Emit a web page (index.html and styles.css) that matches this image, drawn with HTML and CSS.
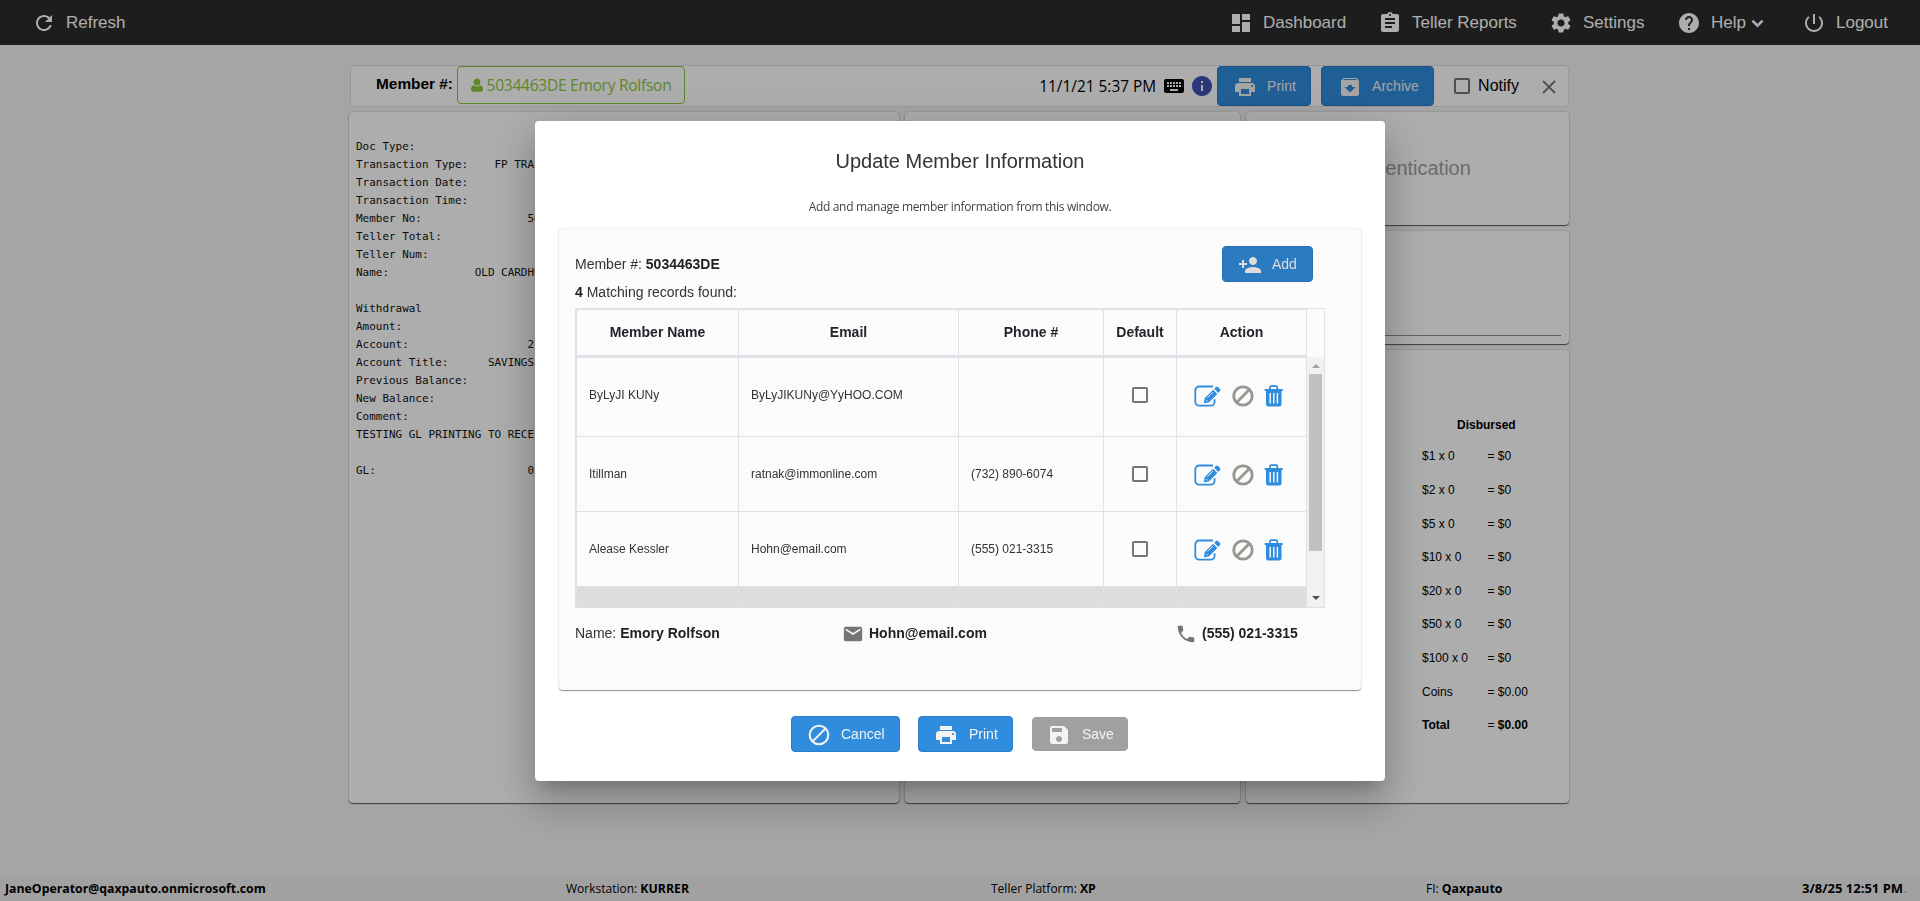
FILE: index.html
```html
<!DOCTYPE html>
<html lang="en">
<head>
<meta charset="utf-8">
<title>Update Member Information</title>
<link rel="stylesheet" href="styles.css">
</head>
<body>
<svg class="defs" width="0" height="0">
  <symbol id="refresh" viewBox="0 0 24 24"><path d="M17.65 6.35C16.2 4.9 14.21 4 12 4c-4.42 0-7.99 3.58-7.99 8s3.57 8 7.99 8c3.73 0 6.84-2.55 7.73-6h-2.08c-.82 2.33-3.04 4-5.65 4-3.31 0-6-2.69-6-6s2.69-6 6-6c1.66 0 3.14.69 4.22 1.78L13 11h7V4l-2.35 2.35z"/></symbol>
  <symbol id="dashboard" viewBox="0 0 24 24"><path d="M3 13h8V3H3v10zm0 8h8v-6H3v6zm10 0h8V11h-8v10zm0-18v6h8V3h-8z"/></symbol>
  <symbol id="assignment" viewBox="0 0 24 24"><path d="M19 3h-4.18C14.4 1.84 13.3 1 12 1c-1.3 0-2.4.84-2.82 2H5c-1.1 0-2 .9-2 2v14c0 1.100.9 2 2 2h14c1.100 0 2-.9 2-2V5c0-1.100-.9-2-2-2zm-7 0c.55 0 1 .45 1 1s-.45 1-1 1-1-.45-1-1 .45-1 1-1zm2 14H7v-2h7v2zm3-4H7v-2h10v2zm0-4H7V7h10v2z"/></symbol>
  <symbol id="settings" viewBox="0 0 24 24"><path d="M19.140 12.940c.04-.3.06-.61.06-.94 0-.32-.02-.64-.07-.94l2.030-1.580c.18-.14.23-.41.12-.61l-1.920-3.320c-.12-.22-.37-.29-.59-.22l-2.390.96c-.5-.38-1.030-.7-1.620-.94l-.36-2.540c-.04-.24-.24-.41-.48-.41h-3.840c-.24 0-.43.17-.47.41l-.36 2.540c-.59.24-1.130.57-1.620.94l-2.390-.96c-.22-.08-.47 0-.59.22L2.740 8.870c-.12.21-.08.47.12.61l2.030 1.580c-.05.3-.09.63-.09.94s.02.64.07.94l-2.030 1.580c-.18.14-.23.41-.12.61l1.920 3.320c.12.22.37.29.59.22l2.390-.96c.5.38 1.030.7 1.620.94l.36 2.540c.05.24.24.41.48.41h3.840c.24 0 .44-.17.47-.41l.36-2.540c.59-.24 1.130-.56 1.620-.94l2.390.96c.22.08.47 0 .59-.22l1.920-3.320c.12-.22.07-.47-.12-.61l-2.010-1.580zM12 15.600c-1.980 0-3.600-1.620-3.600-3.600s1.620-3.600 3.600-3.600 3.600 1.620 3.600 3.600-1.620 3.600-3.600 3.600z"/></symbol>
  <symbol id="help" viewBox="0 0 24 24"><path d="M12 2C6.480 2 2 6.480 2 12s4.480 10 10 10 10-4.480 10-10S17.520 2 12 2zm1 17h-2v-2h2v2zm2.070-7.750l-.9.920C13.450 12.900 13 13.500 13 15h-2v-.5c0-1.100.45-2.100 1.170-2.830l1.240-1.260c.37-.36.59-.86.59-1.410 0-1.100-.9-2-2-2s-2 .9-2 2H8c0-2.210 1.790-4 4-4s4 1.790 4 4c0 .88-.36 1.680-.93 2.250z"/></symbol>
  <symbol id="chevron" viewBox="0 0 12 8"><path d="M1.300 1.300L6 6L10.700 1.300" fill="none" stroke="currentColor" stroke-width="2.300"/></symbol>
  <symbol id="power" viewBox="0 0 24 24"><path d="M13 3h-2v10h2V3zm4.830 2.170l-1.420 1.420C17.990 7.860 19 9.810 19 12c0 3.870-3.130 7-7 7s-7-3.130-7-7c0-2.190 1.010-4.140 2.580-5.420L6.170 5.170C4.230 6.820 3 9.260 3 12c0 4.970 4.030 9 9 9s9-4.030 9-9c0-2.740-1.230-5.180-3.170-6.830z"/></symbol>
  <symbol id="user" viewBox="0 0 12 14"><path d="M6 0.500a3.200 3.400 0 0 1 0 7a3.200 3.400 0 0 1 0-7zM3 7.200C4.500 8.900 7.500 8.900 9 7.200C11 7.400 12 9 12 11.200C12 13 11 13.700 9.800 13.700H2.200C1 13.700 0 13 0 11.200C0 9 1 7.400 3 7.200z"/></symbol>
  <symbol id="keyboard" viewBox="0 0 24 24"><path d="M20 5H4c-1.100 0-1.990.9-1.990 2L2 17c0 1.100.9 2 2 2h16c1.100 0 2-.9 2-2V7c0-1.100-.9-2-2-2zm-9 3h2v2h-2V8zm0 3h2v2h-2v-2zM8 8h2v2H8V8zm0 3h2v2H8v-2zm-1 2H5v-2h2v2zm0-3H5V8h2v2zm9 7H8v-2h8v2zm0-4h-2v-2h2v2zm0-3h-2V8h2v2zm3 3h-2v-2h2v2zm0-3h-2V8h2v2z"/></symbol>
  <symbol id="info" viewBox="0 0 24 24"><path d="M12 2C6.480 2 2 6.480 2 12s4.480 10 10 10 10-4.480 10-10S17.520 2 12 2zm1 15h-2v-6h2v6zm0-8h-2V7h2v2z"/></symbol>
  <symbol id="print" viewBox="0 0 24 24"><path d="M19 8H5c-1.660 0-3 1.340-3 3v6h4v4h12v-4h4v-6c0-1.660-1.340-3-3-3zm-3 11H8v-5h8v5zm3-7c-.55 0-1-.45-1-1s.45-1 1-1 1 .45 1 1-.45 1-1 1zm-1-9H6v4h12V3z"/></symbol>
  <symbol id="archive" viewBox="0 0 24 24"><path d="M20.540 5.230l-1.390-1.680C18.880 3.210 18.470 3 18 3H6c-.47 0-.88.21-1.160.55L3.460 5.230C3.170 5.570 3 6.020 3 6.500V19c0 1.100.9 2 2 2h14c1.100 0 2-.9 2-2V6.500c0-.48-.17-.93-.46-1.270zM12 17.500L6.500 12H10v-2h4v2h3.500L12 17.500zM5.120 5l.81-1h12l.94 1H5.120z"/></symbol>
  <symbol id="close" viewBox="0 0 14 14"><path d="M1 1L13 13M13 1L1 13" fill="none" stroke="currentColor" stroke-width="1.800"/></symbol>
  <symbol id="person-add" viewBox="0 0 24 24"><path d="M15 12c2.210 0 4-1.790 4-4s-1.790-4-4-4-4 1.790-4 4 1.790 4 4 4zm-9-2V7H4v3H1v2h3v3h2v-3h3v-2H6zm9 4c-2.670 0-8 1.340-8 4v2h16v-2c0-2.660-5.330-4-8-4z"/></symbol>
  <symbol id="edit" viewBox="0 0 27 22"><path d="M19 1.500H5.200A3.900 3.900 0 0 0 1.300 5.400V16.800A3.900 3.900 0 0 0 5.200 20.700H16.700A3.900 3.900 0 0 0 20.600 16.800V14.200" fill="none" stroke="currentColor" stroke-width="1.800"/><path d="M10 18.300L10.600 13.200L19.200 4.800L23.300 9L14.800 17.500zM20.200 3.800L22 2Q23 1 24 2L26 4Q27 5 26 6L24.300 8z"/><path d="M13.400 12.600L19 7M12 14.800L13.600 16.400" stroke="#fbfbfb" stroke-width=".8" fill="none"/></symbol>
  <symbol id="ban" viewBox="0 0 22 22"><path d="M4.300 17.700L17.700 4.300" stroke="currentColor" stroke-width="2.800"/><circle cx="11" cy="11" r="9.200" fill="none" stroke="currentColor" stroke-width="2.800"/></symbol>
  <symbol id="trash" viewBox="0 0 20 22"><path d="M6 4.500V2.400Q6 1.200 7.200 1.200H12.100Q13.300 1.200 13.300 2.400V4.500" fill="none" stroke="currentColor" stroke-width="1.700"/><path d="M.7 4H18.700V6H17.500V19Q17.500 21.500 15.500 21.500H4.200Q2 21.500 2 19V6H.7z"/><path d="M6.200 8V18.500M9.800 8V18.500M13.400 8V18.500" stroke="#fbfbfb" stroke-width="1.400"/></symbol>
  <symbol id="mail" viewBox="0 0 24 24"><path d="M20 4H4c-1.100 0-1.990.9-1.990 2L2 18c0 1.100.9 2 2 2h16c1.100 0 2-.9 2-2V6c0-1.100-.9-2-2-2zm0 4l-8 5-8-5V6l8 5 8-5v2z"/></symbol>
  <symbol id="phone" viewBox="0 0 24 24"><path d="M6.620 10.790c1.440 2.830 3.760 5.140 6.590 6.590l2.200-2.200c.27-.27.67-.36 1.020-.24 1.120.37 2.330.57 3.570.57.55 0 1 .45 1 1V20c0 .55-.45 1-1 1-9.390 0-17-7.610-17-17 0-.55.45-1 1-1h3.500c.55 0 1 .45 1 1 0 1.250.2 2.450.57 3.570.11.35.03.74-.25 1.020l-2.200 2.200z"/></symbol>
  <symbol id="cancel" viewBox="0 0 22 22"><path d="M4 18L18 4" stroke="currentColor" stroke-width="2"/><circle cx="11" cy="11" r="9.300" fill="none" stroke="currentColor" stroke-width="2.100"/></symbol>
  <symbol id="save" viewBox="0 0 24 24"><path d="M17 3H5c-1.110 0-2 .9-2 2v14c0 1.100.89 2 2 2h14c1.100 0 2-.9 2-2V7l-4-4zm-5 16c-1.660 0-3-1.340-3-3s1.340-3 3-3 3 1.340 3 3-1.340 3-3 3zm3-10H5V5h10v4z"/></symbol>
</svg>

<div class="app">
  <header class="nav">
    <a class="nav-item"><svg class="i24"><use href="#refresh"/></svg><span>Refresh</span></a>
    <nav class="nav-right">
      <a class="nav-item nav-dashboard"><svg class="i24"><use href="#dashboard"/></svg><span>Dashboard</span></a>
      <a class="nav-item nav-reports"><svg class="i24"><use href="#assignment"/></svg><span>Teller Reports</span></a>
      <a class="nav-item nav-settings"><svg class="i24"><use href="#settings"/></svg><span>Settings</span></a>
      <a class="nav-item nav-help"><svg class="i24"><use href="#help"/></svg><span>Help</span><svg class="chev"><use href="#chevron"/></svg></a>
      <a class="nav-item nav-logout"><svg class="i24"><use href="#power"/></svg><span>Logout</span></a>
    </nav>
  </header>

  <main class="work">
    <section class="toolbar">
      <b class="member-label">Member #:</b>
      <span class="member-chip"><svg class="user-icon"><use href="#user"/></svg><span>5034463DE Emory Rolfson</span></span>
      <span class="stamp">11/1/21 5:37 PM</span>
      <svg class="i24 kb"><use href="#keyboard"/></svg>
      <svg class="i24 info"><use href="#info"/></svg>
      <span class="btn tool-btn tool-print"><svg class="i24"><use href="#print"/></svg>Print</span>
      <span class="btn tool-btn tool-archive"><svg class="i24"><use href="#archive"/></svg>Archive</span>
      <span class="box big"></span><span class="notify">Notify</span>
      <svg class="close"><use href="#close"/></svg>
    </section>

    <section class="columns">
      <div class="card receipt"><pre>Doc Type:
Transaction Type:    FP TRA
Transaction Date:
Transaction Time:
Member No:                50
Teller Total:
Teller Num:
Name:             OLD CARDHO

Withdrawal
Amount:
Account:                  2
Account Title:      SAVINGS
Previous Balance:
New Balance:
Comment:
TESTING GL PRINTING TO RECE

GL:                       0</pre></div>
      <div class="card"></div>
      <div class="side">
        <div class="card auth">Authentication</div>
        <div class="card sign"><div class="sign-line"></div></div>
        <div class="card cash">
          <b class="cash-title">Disbursed</b>
          <div class="cash-grid">
            <span>$1 x 0</span><span>= $0</span>
            <span>$2 x 0</span><span>= $0</span>
            <span>$5 x 0</span><span>= $0</span>
            <span>$10 x 0</span><span>= $0</span>
            <span>$20 x 0</span><span>= $0</span>
            <span>$50 x 0</span><span>= $0</span>
            <span>$100 x 0</span><span>= $0</span>
            <span>Coins</span><span>= $0.00</span>
            <b>Total</b><span>= <b>$0.00</b></span>
          </div>
        </div>
      </div>
    </section>
  </main>

  <footer class="status">
    <span class="st-user"><b>JaneOperator@qaxpauto.onmicrosoft.com</b></span>
    <span class="st-ws">Workstation: <b>KURRER</b></span>
    <span class="st-tp">Teller Platform: <b>XP</b></span>
    <span class="st-fi">FI: <b>Qaxpauto</b></span>
    <span class="st-time"><b>3/8/25 12:51 PM</b><i>.</i></span>
  </footer>
</div>

<div class="overlay">
  <div class="modal">
    <h1>Update Member Information</h1>
    <p class="sub">Add and manage member information from this window.</p>
    <div class="panel">
      <div class="panel-top">
        <div class="lines">
          <div>Member #: <b>5034463DE</b></div>
          <div><b>4</b> Matching records found:</div>
        </div>
        <span class="btn add"><svg class="i24"><use href="#person-add"/></svg>Add</span>
      </div>
      <div class="records">
        <div class="table">
          <div class="row head"><div>Member Name</div><div>Email</div><div>Phone #</div><div>Default</div><div>Action</div></div>
          <div class="row first"><div>ByLyJI KUNy</div><div>ByLyJIKUNy@YyHOO.COM</div><div></div><div class="mid"><span class="box"></span></div><div class="acts"><svg class="edit"><use href="#edit"/></svg><svg class="ban"><use href="#ban"/></svg><svg class="trash"><use href="#trash"/></svg></div></div>
          <div class="row"><div>Itillman</div><div>ratnak@immonline.com</div><div>(732) 890-6074</div><div class="mid"><span class="box"></span></div><div class="acts"><svg class="edit"><use href="#edit"/></svg><svg class="ban"><use href="#ban"/></svg><svg class="trash"><use href="#trash"/></svg></div></div>
          <div class="row"><div>Alease Kessler</div><div>Hohn@email.com</div><div>(555) 021-3315</div><div class="mid"><span class="box"></span></div><div class="acts"><svg class="edit"><use href="#edit"/></svg><svg class="ban"><use href="#ban"/></svg><svg class="trash"><use href="#trash"/></svg></div></div>
          <div class="row last"><div></div><div></div><div></div><div></div><div></div></div>
        </div>
        <div class="scroll"><i class="up"></i><i class="thumb"></i><i class="down"></i></div>
      </div>
      <div class="contact">
        <div class="c-name">Name: <b>Emory Rolfson</b></div>
        <div class="c-mail"><svg><use href="#mail"/></svg><b>Hohn@email.com</b></div>
        <div class="c-phone"><svg><use href="#phone"/></svg><b>(555) 021-3315</b></div>
      </div>
    </div>
    <div class="buttons">
      <span class="btn b-cancel"><svg class="i22"><use href="#cancel"/></svg>Cancel</span>
      <span class="btn b-print"><svg class="i24"><use href="#print"/></svg>Print</span>
      <span class="btn b-save"><svg class="i24"><use href="#save"/></svg>Save</span>
    </div>
  </div>
</div>
</body>
</html>
```
FILE: styles.css
```css
* { box-sizing: border-box; }
body { margin: 0; width: 1920px; height: 901px; overflow: hidden; font-family: "Liberation Sans", Arial, sans-serif; color: #000; }
svg { fill: currentColor; flex: none; display: block; }
.defs { display: none; }
.i22 { width: 22px; height: 22px; }
.i24 { width: 24px; height: 24px; }

.app { height: 901px; display: flex; flex-direction: column; background: #f3f3f3; }
.nav { height: 45px; background: #2c2c2c; color: #fff; display: flex; justify-content: space-between; padding: 0 32px; flex: none; }
.nav-right { display: flex; }
.nav-item { display: flex; align-items: center; font-size: 17px; white-space: nowrap; }
.nav-item span { margin-left: 10px; }
.nav-dashboard { width: 149px; }
.nav-reports { width: 171px; }
.nav-settings { width: 128px; }
.nav-help { width: 125px; }
.nav-help .chev { width: 13px; height: 9px; margin: 2px 0 0 5px; }
.nav-logout { width: 86px; }

.work { flex: 1; padding: 20px 351px 0 349px; }
.toolbar { height: 42px; margin-left: 1px; border: 1px solid #e1e1e1; border-radius: 4px; background: #fff; display: flex; align-items: center; padding: 0 12px 0 25px; width: 1219px; }
.member-label { font-size: 15.4px; margin-top: -4px; width: 81px; white-space: nowrap; }
.member-chip { align-self: flex-start; height: 38px; width: 228px; border: 1px solid #8dc63f; border-radius: 4px; color: #8dc63f; display: flex; align-items: center; justify-content: center; gap: 4px; font: 15.6px "Open Sans", sans-serif; letter-spacing: -.3px; white-space: nowrap; }
.user-icon { width: 12px; height: 14px; }
.stamp { margin-left: auto; font: 15.4px "Open Sans", sans-serif; margin-right: 6px; }
.kb { margin-right: 3.5px; }
.info { color: #3f51b5; margin-right: 3.5px; }
.btn { background: #308cdd; border: 1px solid #2a7dc8; border-radius: 4px; color: #f3f3f3; display: flex; align-items: center; font-size: 14px; white-space: nowrap; }
.tool-btn { height: 40px; }
.tool-btn svg { margin: 2px 10px 0 0; }
.tool-print { width: 94px; padding-left: 15px; margin-right: 10px; }
.tool-archive { width: 113px; padding-left: 16px; margin-right: 20px; }
.box { width: 16px; height: 16px; border: 2px solid #757575; border-radius: 2px; flex: none; }
.notify { font-size: 16px; margin: 0 23px 0 8px; }
.close { width: 14px; height: 14px; color: #777; margin-top: 2px; }

.columns { margin-top: 5px; height: 691px; display: grid; grid-template-columns: 550px 335px 323px; gap: 6px; }
.card { background: #fff; border-radius: 4px; box-shadow: 0 1px 1px rgba(0,0,0,.6), 0 0 2px rgba(0,0,0,.25); }
.receipt { padding: 26px 7px; }
.receipt pre { margin: 0; font: 10.96px/18px "DejaVu Sans Mono", monospace; width: 190px; overflow: hidden; color: #111; }
.side { display: grid; grid-template-rows: 113px 113px 453px; gap: 6px; }
.auth { text-align: center; font-size: 20px; color: #a0a0a0; padding-top: 45px; }
.sign { display: flex; align-items: flex-end; padding: 0 8px; }
.sign-line { flex: 1; height: 1px; background: #8f9090; margin-bottom: 8px; }
.cash { padding: 68px 0 0 176px; font-size: 12px; line-height: 14px; }
.cash-title { display: block; padding-left: 35px; margin-bottom: 7.600px; }
.cash-grid { display: grid; grid-template-columns: 65.500px auto; grid-auto-rows: 33.600px; align-items: center; }

.status { height: 26px; flex: none; background: #edeeef; font: 12px "Open Sans", sans-serif; display: grid; grid-template-columns: 561px 425px 435px 376px 1fr; padding-left: 5px; align-items: center; white-space: nowrap; }
.status b { font-size: 12.300px; }
.status .st-time b { font-size: 13px; }
.st-time i { color: #888; margin-left: 1px; font-style: normal; }

.overlay { position: fixed; inset: 0; background: rgba(0,0,0,.32); padding: 121px 535px; }
.modal { width: 850px; height: 660px; background: #fff; border-radius: 4px; box-shadow: 0 11px 15px -7px rgba(0,0,0,.2), 0 24px 38px 3px rgba(0,0,0,.14), 0 9px 46px 8px rgba(0,0,0,.12); padding: 28px 24px 0; color: #333; }
.modal b { color: #222; }
.modal h1 { margin: 0; font-size: 20px; font-weight: 400; line-height: 24px; text-align: center; }
.sub { margin: 25px 0 0; text-align: center; font: 12px/18px "Open Sans", sans-serif; letter-spacing: -.32px; color: #444; height: 31px; }
.panel { height: 461px; background: #fbfbfb; border-radius: 4px; box-shadow: 0 1px 1px rgba(0,0,0,.4), 0 0 2px rgba(0,0,0,.15); padding: 17px 36px 0 16px; }
.panel-top { display: flex; justify-content: space-between; height: 62px; font-size: 14px; }
.lines { line-height: 28px; padding-top: 4px; }
.add { width: 91px; height: 36px; background: #2a7bc0; border-color: #2470b3; color: #ddd; padding-left: 15px; margin-right: 12px; }
.add svg { margin: 2px 10px 0 0; }
.records { height: 300px; width: 750px; border: 1px solid #dee2e6; display: flex; overflow: hidden; }
.table { width: 731px; border: solid #dee2e6; border-width: 1px 0 0 1px; }
.row { display: grid; grid-template-columns: 162px 220px 145px 73px 130px; height: 75px; font-size: 12px; color: #333; }
.row > div { border: solid #dee2e6; border-width: 0 1px 1px 0; display: flex; align-items: center; padding-left: 12px; }
.row.head { height: 48px; font-size: 14px; font-weight: 700; color: #212529; }
.row.head > div { justify-content: center; border-bottom-width: 3px; padding: 0 0 2px; }
.row.first { height: 79px; }
.row.last { background: #ddd; }
.row > .mid { justify-content: center; padding: 0; }
.row > .acts { padding: 1px 0 0 17px; color: #308cdd; }
.row.first > div { padding-bottom: 4px; }
.edit { width: 27px; height: 22px; }
.ban { width: 22px; height: 22px; color: #979791; margin-left: 11px; }
.trash { width: 20px; height: 22px; margin-left: 10px; }
.scroll { width: 17px; margin-top: 48px; background: #f1f1f1; display: flex; flex-direction: column; align-items: center; }
.up { border: solid transparent; border-width: 0 4px 4px; border-bottom-color: #a3a3a3; margin: 7px 0 6px; }
.thumb { width: 13px; height: 177px; background: #c1c1c1; }
.down { border: solid transparent; border-width: 4px 4px 0; border-top-color: #505050; margin-top: auto; margin-bottom: 7px; }
.contact { display: grid; grid-template-columns: 266px 333px auto; font-size: 14px; height: 50px; align-items: center; }
.contact div { display: flex; align-items: center; gap: 4px; }
.contact svg { width: 22px; height: 22px; color: #757575; margin: 1px 1px 0 1px; }
.buttons { display: flex; align-items: center; margin: 26px 0 0 232px; }
.buttons .btn { height: 36px; }
.buttons svg { margin-top: 2px; }
.b-cancel { width: 109px; padding-left: 16px; margin-right: 18px; }
.b-cancel svg { margin-right: 11px; }
.b-print { width: 95px; padding-left: 15px; margin-right: 19px; }
.b-print svg { margin-right: 11px; }
.buttons .b-save { width: 96px; height: 34px; padding-left: 14px; background: #a1a09e; border-color: #a1a09e; }
.b-save svg { margin-right: 11px; }
```
